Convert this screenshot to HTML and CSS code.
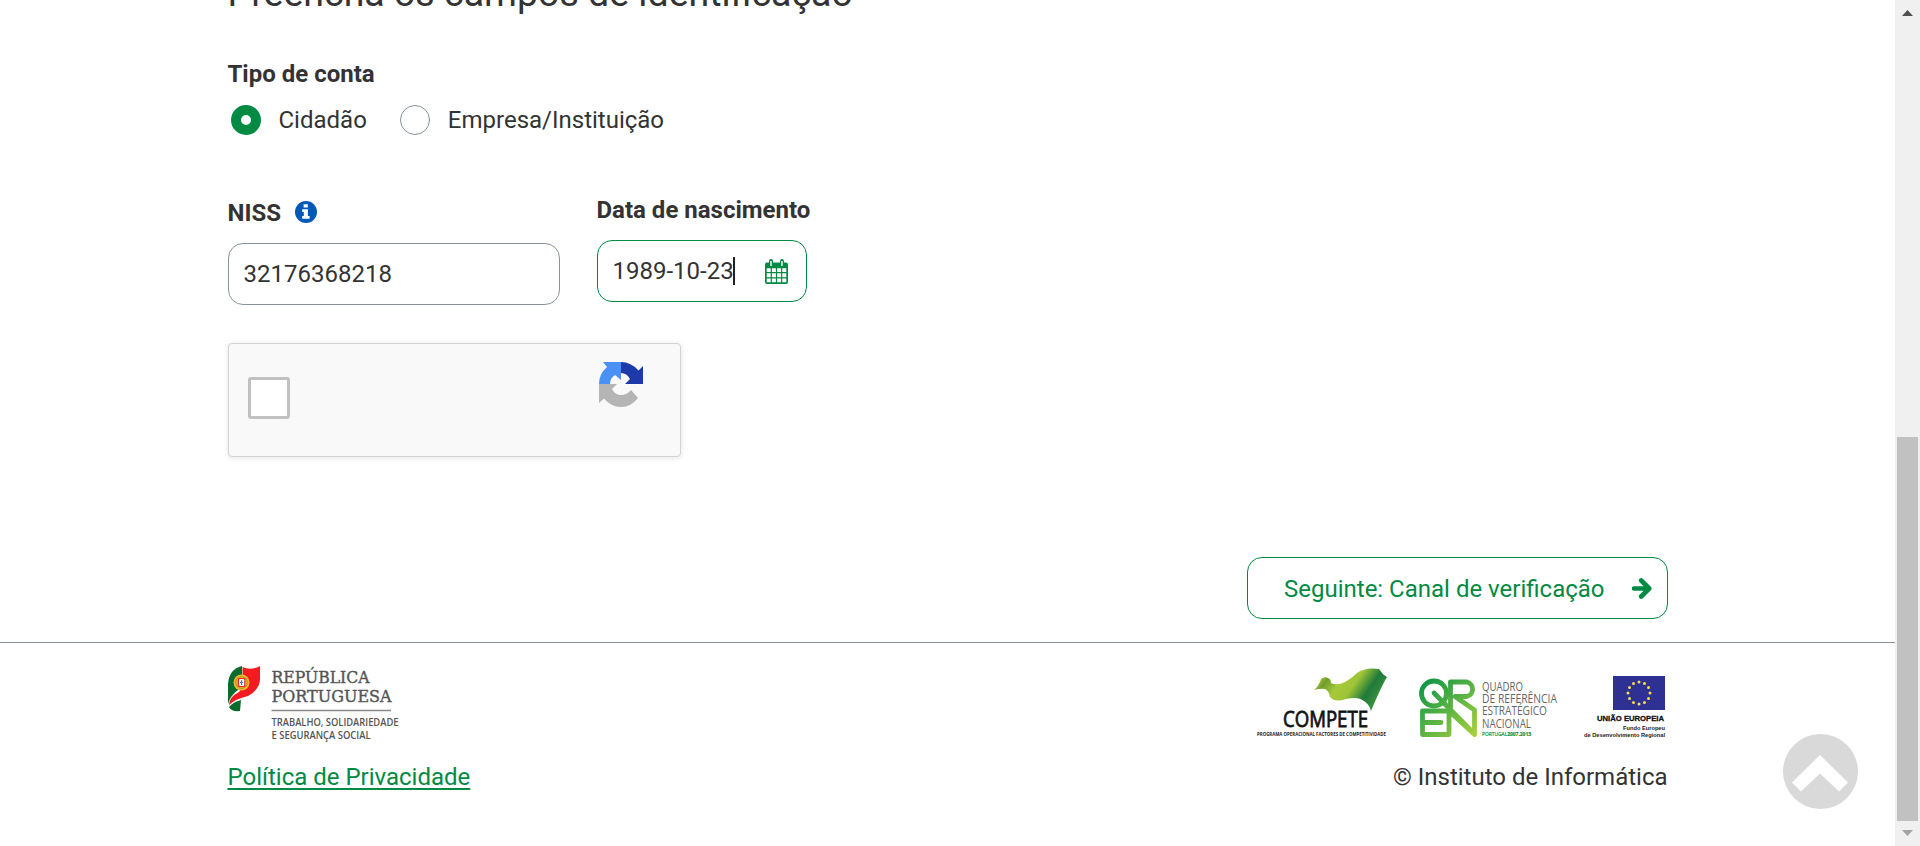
FILE: index.html
```html
<!DOCTYPE html>
<html lang="pt">
<head>
<meta charset="utf-8">
<title>Segurança Social</title>
<link rel="stylesheet" href="styles.css">
</head>
<body>
<div class="viewport">
  <div class="page">
    <main class="content">
      <h1 class="title">Preencha os campos de identificação</h1>
      <div class="label type-label">Tipo de conta</div>
      <div class="radios">
        <label class="radio"><span class="dot dot-on"></span>Cidadão</label>
        <label class="radio"><span class="dot"></span>Empresa/Instituição</label>
      </div>
      <div class="fields">
        <div class="field niss">
          <div class="label">NISS
            <svg class="info" viewBox="0 0 22 22"><circle cx="11" cy="11" r="11" fill="#0059b8"/><path d="M8.6 3.2h4.2v3.2H8.6zM7.2 8.3h5.7v6.8h1.7v2.7H7.2v-2.7h1.6V11H7.2z" fill="#fff"/></svg>
          </div>
          <div class="input">32176368218</div>
        </div>
        <div class="field date">
          <div class="label">Data de nascimento</div>
          <div class="input input-focus"><span>1989-10-23</span><i class="caret"></i>
            <svg class="calendar" viewBox="0 0 23 25"><path fill="#008a43" d="M2 3.5h2V2.2Q4 0 6 0t2 2.200V3.500h7V2.200Q15 0 17 0t2 2.200V3.500h2q2 0 2 2V23q0 2-2 2H2q-2 0-2-2V5.500q0-2 2-2z"/><path fill="#fff" d="M5.300 2h1.400v5H5.300zM16.300 2h1.400v5h-1.400zM1.700 9.200h4v3.700h-4zM6.900 9.200h4v3.700h-4zM12.100 9.200h4v3.700h-4zM17.300 9.200h4v3.700h-4zM1.700 14.200h4v4h-4zM6.900 14.200h4v4h-4zM12.100 14.200h4v4h-4zM17.300 14.200h4v4h-4zM1.700 19.500h4v3.700h-4zM6.900 19.500h4v3.700h-4zM12.100 19.500h4v3.700h-4zM17.300 19.500h4v3.700h-4z"/></svg>
          </div>
        </div>
      </div>
      <div class="captcha">
        <span class="checkbox"></span>
        <svg class="captcha-logo" viewBox="0 0 44 45"><path fill="#4a90f5" d="M4 0h18v18l-6-5q-5 3-5 9H0Q0 12 8 5z"/><path fill="#1c3aa9" d="M22 0q10 0 17.500 8.500L44 4v18H26l5-5q-3-6-9-6z"/><path fill="#b5b5b5" d="M0 22h18l-5 5q3 6 9 6 6 0 10-5l7 8q-7 9-17 9-10 0-17-8.500L0 41z"/></svg>
      </div>
      <div class="actions">
        <a class="button">Seguinte: Canal de verificação
          <svg class="arrow" viewBox="0 0 20 21"><path d="M2 10.500h14M9.200 2.500l8 8-8 8" fill="none" stroke="#008a43" stroke-width="4.600" stroke-linejoin="round" stroke-linecap="round"/></svg>
        </a>
      </div>
    </main>
    <footer class="footer">
      <div class="foot-inner">
        <div class="foot-row logos">
          <svg class="republica" viewBox="0 0 180 80">
            <path fill="#0a6b2c" d="M14 0Q1 3 0 18v20q2-8 10-14l4-5z"/>
            <path fill="#f31b20" d="M14.500 1q8 4 17.500-1V14Q31 24 20 30q-13 3-19 9Q1 31 11 26l3.500-5z"/>
            <path fill="#0a6b2c" d="M1 41q4-5 12-7l-1 11Q3 46 1 41z"/>
            <circle cx="13.500" cy="16.500" r="8" fill="#e8b92d"/><circle cx="13.500" cy="16.500" r="5.800" fill="none" stroke="#c98225" stroke-width="1"/><rect x="9.800" y="12" width="7.600" height="9" rx="1.500" fill="#e52a24"/><rect x="11" y="13" width="5.200" height="7" rx="1.200" fill="#fff"/><path d="M13.600 14v5M12 16.500h3.200" stroke="#4a79bd" stroke-width="1.100"/>
            <g fill="#555"><g class="serif"><text x="43.500" y="17.300" textLength="98" lengthAdjust="spacingAndGlyphs">REPÚBLICA</text><text x="43.500" y="35.500" textLength="120" lengthAdjust="spacingAndGlyphs">PORTUGUESA</text></g>
            <g class="ministry"><text x="43.500" y="60" textLength="127" lengthAdjust="spacingAndGlyphs">TRABALHO, SOLIDARIEDADE</text><text x="43.500" y="72.500" textLength="99" lengthAdjust="spacingAndGlyphs">E SEGURANÇA SOCIAL</text></g></g>
            <path d="M43.500 44.500h119.500" stroke="#888" stroke-width="1.500"/>
          </svg>
          <svg class="partners" viewBox="0 0 413 72">
            <defs>
              <linearGradient id="wave" x1="0" y1="0" x2="1" y2=".4"><stop offset="0" stop-color="#84b52d"/><stop offset=".13" stop-color="#b1cf3a"/><stop offset=".24" stop-color="#6f9c2c"/><stop offset=".42" stop-color="#a5c938"/><stop offset=".6" stop-color="#9fc438"/><stop offset=".82" stop-color="#1f7a3a"/><stop offset="1" stop-color="#3a9140"/></linearGradient>
              <linearGradient id="qren" gradientUnits="userSpaceOnUse" x1="165" y1="12" x2="218" y2="68"><stop offset="0" stop-color="#079347"/><stop offset="1" stop-color="#a4d03f"/></linearGradient>
            </defs>
            <path fill="url(#wave)" d="M58 23Q63 19 65 12q4-3 7-1 3 1 3 5 6 3 14-1 6-3 12-9 8-6 22-4 3 5 8 8Q125 20 115 44q-2-7-7-10-6-5-18-2-11 4-16-2-1-6-5-8-4-1-11 1z"/>
            <text class="compete" x="27" y="59.500" textLength="85" lengthAdjust="spacingAndGlyphs">COMPETE</text>
            <text class="programme" x="1" y="69" textLength="129" lengthAdjust="spacingAndGlyphs">PROGRAMA OPERACIONAL FACTORES DE COMPETITIVIDADE</text>
            <g fill="none" stroke="url(#qren)" stroke-width="4.800" stroke-linejoin="round" stroke-linecap="round"><circle cx="178" cy="26.500" r="12.500"/><path d="M178 26l40.500 41V43L199 29.500h12a7.500 7.500 0 0 0 0-14.500H194.500V42M193 44h-26.500v23.500H193zM193 44l25.500 23.500M168 55.500h17"/></g>
            <g class="qren-text"><text x="226" y="23.500" textLength="41" lengthAdjust="spacingAndGlyphs">QUADRO</text><text x="226" y="36" textLength="75" lengthAdjust="spacingAndGlyphs">DE REFERÊNCIA</text><text x="226" y="48" textLength="65" lengthAdjust="spacingAndGlyphs">ESTRATÉGICO</text><text x="226" y="60.500" textLength="49" lengthAdjust="spacingAndGlyphs">NACIONAL</text></g>
            <text class="portugal" x="226" y="68.500" textLength="49" lengthAdjust="spacingAndGlyphs">PORTUGAL<tspan font-weight="700">2007.2013</tspan></text>
            <rect x="357" y="9" width="52" height="34" fill="#2e3192"/>
            <g fill="#f4e04a"><circle cx="383" cy="15" r="1.500"/><circle cx="388.500" cy="16.500" r="1.500"/><circle cx="392.500" cy="20.500" r="1.500"/><circle cx="394" cy="26" r="1.500"/><circle cx="392.500" cy="31.500" r="1.500"/><circle cx="388.500" cy="35.500" r="1.500"/><circle cx="383" cy="37" r="1.500"/><circle cx="377.500" cy="35.500" r="1.500"/><circle cx="373.500" cy="31.500" r="1.500"/><circle cx="372" cy="26" r="1.500"/><circle cx="373.500" cy="20.500" r="1.500"/><circle cx="377.500" cy="16.500" r="1.500"/></g>
            <text class="eu" x="341" y="54" textLength="67" lengthAdjust="spacingAndGlyphs">UNIÃO EUROPEIA</text>
            <g class="fund"><text x="367" y="63" textLength="42" lengthAdjust="spacingAndGlyphs">Fundo Europeu</text><text x="328" y="69.500" textLength="81" lengthAdjust="spacingAndGlyphs">de Desenvolvimento Regional</text></g>
          </svg>
        </div>
        <div class="foot-row">
          <a class="privacy">Política de Privacidade</a>
          <span>© Instituto de Informática</span>
        </div>
      </div>
    </footer>
  </div>
  <div class="scrollbar">
    <svg class="sb-arrow" viewBox="0 0 25 25"><path d="M7 16l5.500-6 5.500 6z" fill="#505050"/></svg>
    <div class="track"><div class="thumb"></div></div>
    <svg class="sb-arrow" viewBox="0 0 25 25"><path d="M7 9h11l-5.500 6z" fill="#a3a3a3"/></svg>
  </div>
  <svg class="to-top" viewBox="0 0 75 75"><circle cx="37.500" cy="37.500" r="37.500" fill="#d9d9d9"/><path d="M37 22L64 48.500 56 56.500 37 38.500 18 56.500 10 48.500z" fill="#fff" stroke="#fff" stroke-width="1.500" stroke-linejoin="round"/></svg>
</div>
</body>
</html>
```
FILE: styles.css
```css
* { box-sizing: border-box; }
body { margin: 0; background: #fff; color: #333; font: 24px/36px Roboto, sans-serif; overflow: hidden; }
svg { display: block; }
.viewport { position: relative; display: flex; height: 846px; overflow: hidden; }
.page { flex: 1; display: flex; flex-direction: column; }
.content { height: 642px; padding: 0 227px 0 227.5px; }
.title { margin: -33px 0 0; font-size: 37.5px; line-height: 52px; font-weight: 400; white-space: nowrap; }
.label { display: flex; align-items: center; gap: 14px; font-weight: 700; height: 36px; }
.type-label { margin-top: 37px; }
.radios { display: flex; gap: 33px; margin-top: 10px; padding-left: 3px; }
.radio { display: flex; align-items: center; gap: 18px; height: 36px; }
.dot { width: 30px; height: 30px; border: 1px solid #869298; border-radius: 50%; }
.dot-on { border: 10.5px solid #008a43; }
.fields { display: flex; align-items: flex-start; gap: 37px; margin-top: 54px; }
.niss { width: 332px; padding-top: 3px; }
.date { width: 210px; white-space: nowrap; }
.info { width: 22px; height: 22px; margin-bottom: 2px; }
.input { display: flex; align-items: center; height: 62px; margin-top: 12px; padding: 0 15px; border: 1px solid #8794a0; border-radius: 15px; }
.input-focus { border-color: #008a43; }
.caret { width: 2px; height: 28px; margin-left: -1px; background: #222; }
.calendar { width: 23px; height: 25px; margin-left: auto; margin-right: 3px; }
.captcha { display: flex; justify-content: space-between; width: 453px; height: 114px; margin-top: 38px; padding: 18px 37px 0 19px; border: 1px solid #d3d3d3; border-radius: 4px; background: #f9f9f9; box-shadow: 0 1px 4px 1px rgba(0,0,0,.08); }
.checkbox { width: 42px; height: 42px; margin-top: 15px; border: 3px solid #c1c1c1; border-radius: 3px; background: #fff; }
.captcha-logo { width: 44px; height: 45px; }
.actions { display: flex; justify-content: flex-end; margin-top: 100px; }
.button { display: flex; align-items: center; justify-content: space-between; width: 421px; height: 62px; padding: 1px 15px 0 36px; border: 1px solid #008a43; border-radius: 15px; color: #008a43; }
.arrow { width: 20px; height: 21px; }
.footer { flex: 1; border-top: 1px solid #869298; padding: 23px 227.5px 0 227.5px; }
.foot-row { display: flex; justify-content: space-between; }
.logos { height: 93px; }
.republica { width: 180px; height: 80px; }
.partners { width: 413px; height: 72px; margin: 1px -1px 0 0; }
.privacy { color: #008a43; text-decoration: underline; text-underline-offset: 3px; text-decoration-thickness: 2px; }
.serif { font: 16.5px "DejaVu Serif", serif; stroke: #555; stroke-width: .4px; }
.ministry { font: 600 10px "Open Sans", sans-serif; }
.compete { font: 22px "Open Sans", sans-serif; fill: #111; stroke: #111; stroke-width: .8px; }
.programme { font: 700 5px "Open Sans", sans-serif; fill: #222; }
.qren-text { font: 12px "Open Sans", sans-serif; fill: #666; }
.portugal { font: 5.5px "Open Sans", sans-serif; fill: #079347; stroke: #079347; stroke-width: .2px; }
.eu { font: 700 8px "Liberation Sans", sans-serif; fill: #111; stroke: #111; stroke-width: .3px; }
.fund { font: 700 6px "Liberation Sans", sans-serif; fill: #222; }
.scrollbar { width: 25px; height: 846px; display: flex; flex-direction: column; background: #f0f0f0; }
.sb-arrow { width: 25px; height: 25px; }
.track { flex: 1; padding: 412px 2px 0; }
.thumb { height: 384px; background: #c1c1c1; }
.to-top { position: absolute; right: 62px; bottom: 37px; width: 75px; height: 75px; }
```
